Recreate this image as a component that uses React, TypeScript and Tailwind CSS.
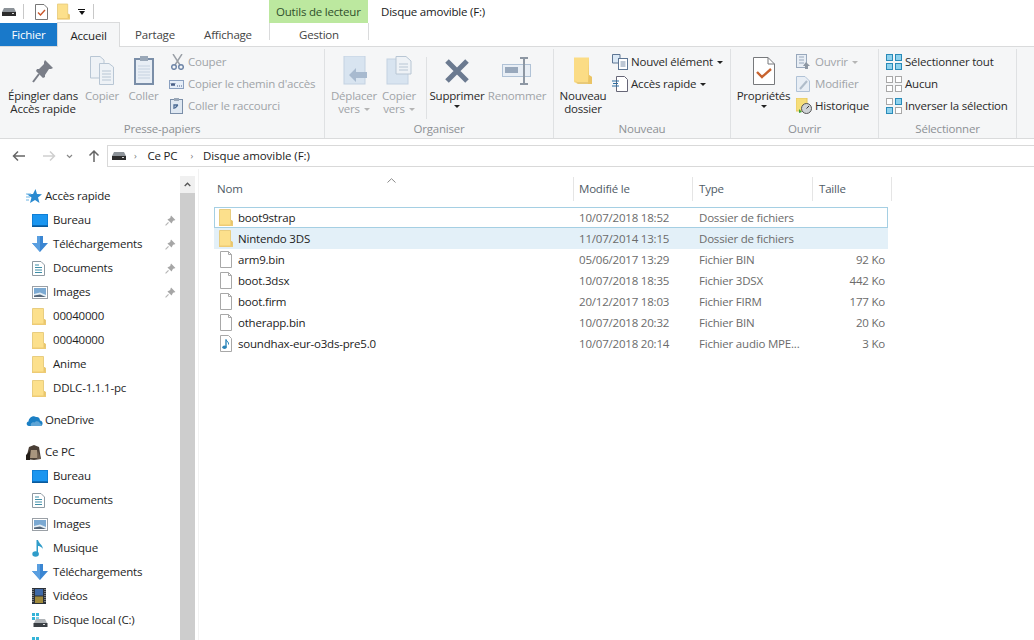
import type { ReactNode } from "react";

const Drive = ({ className = "" }: { className?: string }) => (
  <svg width="14" height="8" viewBox="0 0 14 8" className={className}>
    <path d="M2 0h10l2 4v4H0V4z" fill="#8c9298" />
    <rect x="0" y="4" width="14" height="4" fill="#2c2c2c" />
    <rect x="10" y="5" width="2" height="1" fill="#d8d8d8" />
  </svg>
);

const Folder = ({ w = 14, h = 17 }: { w?: number; h?: number }) => (
  <svg width={w} height={h} viewBox="0 0 14 17" className="shrink-0">
    <path d="M0.5 0.5H11.5V11L13.5 12V16.5H0.5z" fill="#fce08c" stroke="#e8cd80" />
    <path d="M11.5 11L13.5 12V16.5H11.5z" fill="#e9c66c" />
    <rect x="0" y="15.5" width="14" height="1.5" fill="#eecb74" />
  </svg>
);

const FileIcon = () => (
  <svg width="14" height="17" viewBox="0 0 14 17" className="shrink-0">
    <path d="M1.5 .5H9.5L12.5 3.5V16.5H1.5z" fill="#fff" stroke="#a8a8a8" />
    <path d="M9.5 .5V3.5H12.5" fill="none" stroke="#a8a8a8" />
  </svg>
);

const AudioFile = () => (
  <svg width="14" height="17" viewBox="0 0 14 17" className="shrink-0">
    <path d="M1.5 .5H9.5L12.5 3.5V16.5H1.5z" fill="#fff" stroke="#a8a8a8" />
    <path d="M7 4.5V12" stroke="#2a84b8" strokeWidth="1.4" fill="none" />
    <path d="M7 4.5C8 7 10 7 9.5 9.5" stroke="#2a84b8" fill="none" />
    <ellipse cx="5.5" cy="12.3" rx="2.2" ry="1.8" fill="#2a84b8" />
  </svg>
);

const Pin = () => (
  <svg width="11" height="11" viewBox="0 0 10 10">
    <path d="M5.5 0.5L9.5 4.5L8.3 5L7.3 5.2L6 7.8L2.2 4L4.8 2.7L5 1.7z" fill="#a6a6a6" />
    <path d="M3.2 6.8L.5 9.5" stroke="#b4b4b4" />
  </svg>
);

const Monitor = () => (
  <svg width="16" height="13" viewBox="0 0 16 13">
    <rect width="16" height="13" fill="#0f7fd6" />
    <rect x="1" y="1" width="14" height="10" fill="#1b96f0" />
    <rect x="0" y="11.5" width="16" height="1.5" fill="#0a5a9c" />
  </svg>
);

const Download = () => (
  <svg width="16" height="16" viewBox="0 0 16 16">
    <path d="M5 0H11V7H16L8 16L0 7H5z" fill="#3b86d2" />
    <path d="M5 0H8V16L0 7H5z" fill="#5a9fe0" />
  </svg>
);

const Doc = () => (
  <svg width="13" height="15" viewBox="0 0 13 15">
    <path d="M.5 .5H9L12.5 4V14.5H.5z" fill="#fff" stroke="#8e9aa3" />
    <path d="M3 4H7M3 6.5H10M3 9H10M3 11.5H10" stroke="#3f8fa8" />
  </svg>
);

const Pict = () => (
  <svg width="16" height="13" viewBox="0 0 16 13">
    <rect x=".5" y=".5" width="15" height="12" fill="#fff" stroke="#9aa0a6" />
    <rect x="2" y="2" width="12" height="9" fill="#7ba9d2" />
    <path d="M2 8L8 6.5L14 9V11H2z" fill="#e4eef5" />
    <path d="M2 11V9.5L8 8.5L14 11z" fill="#55677a" />
  </svg>
);

const Music = () => (
  <svg width="12" height="17" viewBox="0 0 12 17">
    <path d="M4.5 0H6C6.5 3 11 5 11 9.5C11 8 8 6 6 6V14h-1.500z" fill="#2f9cc9" />
    <ellipse cx="3.6" cy="14" rx="3.3" ry="2.8" fill="#2f9cc9" />
  </svg>
);

const Film = () => (
  <svg width="14" height="16" viewBox="0 0 14 16">
    <rect width="14" height="16" fill="#2c3138" />
    <rect x="3" y="1" width="8" height="6.500" fill="#3f6aa8" />
    <rect x="3" y="8.500" width="8" height="6.500" fill="#a08a3c" />
    <path d="M1 1v14M13 1v14" stroke="#c8c8c8" strokeDasharray="1 1" />
  </svg>
);

const LocalDisk = () => (
  <svg width="16" height="14" viewBox="0 0 16 14">
    <rect x="0" y="0" width="3" height="3" fill="#35b4d8" />
    <rect x="4" y="0" width="3" height="3" fill="#35b4d8" />
    <rect x="0" y="4" width="3" height="3" fill="#35b4d8" />
    <rect x="4" y="4" width="3" height="3" fill="#7fd0e8" />
    <path d="M4 6H13L15 10H2z" fill="#b0b4b8" />
    <rect x="1.500" y="10" width="14" height="4" fill="#3a3f44" />
    <rect x="11" y="11" width="2" height="1" fill="#ddd" />
  </svg>
);

const StarIcon = () => (
  <svg width="16" height="16" viewBox="0 0 16 16">
    <path d="M9.500 1L11 6L16 6.300L12 9.500L13.500 15L9 12L4 15L5.500 9.500L1 6.300L7 6z" fill="#2a8ad0" />
    <path d="M0 6H5M0 9H4M0 12H3" stroke="#6cb4e4" />
  </svg>
);

const Cloud = () => (
  <svg width="17" height="11" viewBox="0 0 17 11">
    <path d="M3 11C0 11 0 7 2.500 6.500C3 2.500 7 0 10 2C12.500 1.500 14 3.500 14 5.500C16.500 5.500 17.500 9 15.500 11z" fill="#1b7fc4" />
    <path d="M5 11C4 8.500 6.500 6.500 8.500 7.500C10 5.500 13.500 6 14 8.500C15.500 8.500 16 10 15.500 11z" fill="#fff" opacity=".3" />
  </svg>
);

const Avatar = () => (
  <svg width="15" height="15" viewBox="0 0 15 15">
    <path d="M3 2L8 0L13 2L15 14L8 15L0 14z" fill="#4a3f36" />
    <path d="M5 5H11L12 13H4z" fill="#a8957e" />
    <path d="M0 10L4 6V15H0z" fill="#231d18" />
    <path d="M12 6L15 14H11z" fill="#6a5a4c" />
  </svg>
);

const NavRow = ({ icon, label, pin, top }: { icon: ReactNode; label: string; pin?: boolean; top?: boolean }) => (
  <div className={`flex h-6 items-center text-[11.5px] text-[#1e1e1e] ${top ? "pl-[26px]" : "pl-[32px]"}`}>
    <span className={`flex shrink-0 items-center justify-start ${top ? "w-[19px]" : "w-[21px]"}`}>{icon}</span>
    <span className="flex-1 whitespace-nowrap">{label}</span>
    {pin && (
      <span className="mr-[4px] flex">
        <Pin />
      </span>
    )}
  </div>
);

const Caret = ({ muted }: { muted?: boolean }) => (
  <span className={`ml-[4px] inline-block h-0 w-0 border-x-[3px] border-t-[3px] border-x-transparent align-middle ${muted ? "border-t-[#b5b5b5]" : "border-t-[#222]"}`} />
);

const LargeBtn = ({ icon, label, w, muted, caret }: { icon: ReactNode; label: ReactNode; w: string; muted?: boolean; caret?: boolean }) => (
  <div className={`flex shrink-0 flex-col items-center ${w}`}>
    <div className="flex h-[40px] w-full items-center justify-center pt-[3px]">{icon}</div>
    <div className={`text-center text-[11.5px] leading-[13px] whitespace-nowrap ${muted ? "text-[#a0a4a8]" : "text-[#2a2a2a]"}`}>{label}</div>
    {caret && <div className="mt-[3px] h-0 w-0 border-x-[3px] border-t-[3px] border-x-transparent border-t-[#222]" />}
  </div>
);

const SmallBtn = ({ icon, label, muted, caret }: { icon: ReactNode; label: string; muted?: boolean; caret?: boolean }) => (
  <div className={`flex h-[22px] items-center text-[11.5px] whitespace-nowrap ${muted ? "text-[#a0a4a8]" : "text-[#2a2a2a]"}`}>
    <span className="flex w-[19px] shrink-0 items-center">{icon}</span>
    {label}
    {caret && <Caret muted={muted} />}
  </div>
);

const Group = ({ label, w, children }: { label: string; w: string; children: ReactNode }) => (
  <div className={`flex shrink-0 flex-col border-r border-[#dfe1e3] ${w}`}>
    <div className="flex h-[72px] flex-1">{children}</div>
    <div className="pb-px text-center text-[11.5px] leading-[16px] text-[#8d9195]">{label}</div>
  </div>
);

const GridIcon = ({ cells }: { cells: boolean[] }) => (
  <div className="grid h-[16px] w-[16px] grid-cols-2 gap-[2px]">
    {cells.map((c, i) => (
      <div key={i} className={c ? "border border-[#2a8bb8] bg-[#8ed2ee]" : "border border-[#a8a8a8] bg-white"} />
    ))}
  </div>
);

const files = [
  { name: "boot9strap", date: "10/07/2018 18:52", type: "Dossier de fichiers", size: "", icon: "folder" },
  { name: "Nintendo 3DS", date: "11/07/2014 13:15", type: "Dossier de fichiers", size: "", icon: "folder" },
  { name: "arm9.bin", date: "05/06/2017 13:29", type: "Fichier BIN", size: "92 Ko", icon: "file" },
  { name: "boot.3dsx", date: "10/07/2018 18:35", type: "Fichier 3DSX", size: "442 Ko", icon: "file" },
  { name: "boot.firm", date: "20/12/2017 18:03", type: "Fichier FIRM", size: "177 Ko", icon: "file" },
  { name: "otherapp.bin", date: "10/07/2018 20:32", type: "Fichier BIN", size: "20 Ko", icon: "file" },
  { name: "soundhax-eur-o3ds-pre5.0", date: "10/07/2018 20:14", type: "Fichier audio MPE...", size: "3 Ko", icon: "audio" },
];

export default function App() {
  return (
    <div className="flex h-[640px] w-[1034px] flex-col overflow-hidden bg-white font-['Open_Sans','Noto_Sans',sans-serif] text-[11.5px] tracking-[-0.2px]">
      {/* title bar */}
      <div className="flex h-[23px] shrink-0 items-center">
        <Drive className="ml-[2px]" />
        <div className="ml-[7px] h-[15px] w-px bg-[#c8c8c8]" />
        <svg width="13" height="16" viewBox="0 0 13 16" className="ml-[11px]">
          <path d="M.5 .5H9L12.500 4V15.500H.5z" fill="#fff" stroke="#777" />
          <path d="M3 8.500L5.500 11L10 6" fill="none" stroke="#c8562a" strokeWidth="1.400" />
        </svg>
        <div className="ml-[9px]">
          <Folder w={13} h={17} />
        </div>
        <div className="ml-[8px] flex flex-col items-center gap-[1px]">
          <div className="h-px w-[7px] bg-[#111]" />
          <div className="h-0 w-0 border-x-[3.500px] border-t-[4px] border-x-transparent border-t-[#111]" />
        </div>
        <div className="ml-[8px] h-[15px] w-px bg-[#c8c8c8]" />
        <div className="ml-[175px] flex h-[23px] w-[99px] items-center bg-[#bce89f] pl-[7px] text-[#30502c]">Outils de lecteur</div>
        <div className="ml-[13px] text-[#1a1a1a]">Disque amovible (F:)</div>
      </div>

      {/* tabs */}
      <div className="flex h-[24px] shrink-0 items-stretch border-b border-[#dadbdc] text-[#444]">
        <div className="flex w-[57px] items-center justify-center bg-[#1979ca] pt-px text-white">Fichier</div>
        <div className="z-10 -mt-[1px] -mb-[1px] flex w-[63px] items-center justify-center border-x border-t border-[#dadbdc] bg-[#f5f6f7] pt-px text-[#222]">Accueil</div>
        <div className="flex w-[70px] items-center justify-center pt-px">Partage</div>
        <div className="flex w-[76px] items-center justify-center pt-px">Affichage</div>
        <div className="ml-[3px] h-[17px] w-[100px] self-start border-x border-[#dadbdc] text-center leading-[24px]">Gestion</div>
      </div>

      {/* ribbon */}
      <div className="flex h-[92px] shrink-0 border-b border-[#dadbdc] bg-[#f5f6f7] pt-[2px]">
        <Group label="Presse-papiers" w="w-[325px]">
          <LargeBtn
            w="w-[86px]"
            label={<>Épingler dans<br />Accès rapide</>}
            icon={
              <svg width="22" height="24" viewBox="0 0 22 24">
                <path d="M13 1L21 9L19 10L17 10L13 16L13 18L11 19L4 12L5 10L7 10L12 5L12 3z" fill="#7a7e88" />
                <path d="M7 15L1 23" stroke="#7a7e88" strokeWidth="2" />
              </svg>
            }
          />
          <LargeBtn
            w="w-[32px]"
            muted
            label="Copier"
            icon={
              <svg width="24" height="29" viewBox="0 0 24 29">
                <path d="M.5 .5H10L14 4V22H.5z" fill="#eef2f6" stroke="#b8c6d4" />
                <path d="M9.500 7.500H19L23.500 11V28.500H9.500z" fill="#eef2f6" stroke="#b8c6d4" />
                <path d="M12 15H21M12 18H21M12 21H21M12 24H21" stroke="#b8c6d4" />
              </svg>
            }
          />
          <LargeBtn
            w="w-[51px]"
            muted
            label="Coller"
            icon={
              <svg width="20" height="29" viewBox="0 0 20 29">
                <rect x="1" y="3" width="18" height="25" fill="#e8eef5" stroke="#7a8ea8" strokeWidth="2" />
                <rect x="6" y="0" width="8" height="5" fill="#9aa8b8" />
                <path d="M4 10H16M4 13H16M4 16H16M4 19H16M4 22H16" stroke="#c6d2e0" />
              </svg>
            }
          />
          <div className="pt-[2px]">
            <SmallBtn
              muted
              label="Couper"
              icon={
                <svg width="13" height="16" viewBox="0 0 13 16" className="ml-[2px]">
                  <path d="M2 0L9 11M11 0L4 11" stroke="#9a9fa6" strokeWidth="1.400" />
                  <circle cx="3" cy="13" r="2.300" fill="none" stroke="#6f86a8" strokeWidth="1.500" />
                  <circle cx="10" cy="13" r="2.300" fill="none" stroke="#6f86a8" strokeWidth="1.500" />
                </svg>
              }
            />
            <SmallBtn
              muted
              label="Copier le chemin d'accès"
              icon={
                <svg width="15" height="9" viewBox="0 0 15 9">
                  <rect x=".5" y=".5" width="14" height="8" fill="#e6eef8" stroke="#8aa0c0" />
                  <path d="M2 3L3 6L4 3L5 6L6 3M8 6H9M10 6H11M12 6H13" stroke="#4a6088" fill="none" />
                </svg>
              }
            />
            <SmallBtn
              muted
              label="Coller le raccourci"
              icon={
                <svg width="13" height="16" viewBox="0 0 13 16" className="ml-px">
                  <rect x=".5" y="1.500" width="12" height="14" fill="#dfe8f2" stroke="#7a8ea8" />
                  <rect x="4" y="0" width="5" height="3" fill="#9aa8b8" />
                  <path d="M4 11V7H8M8 7L5 10" fill="none" stroke="#4a6a94" strokeWidth="1.300" />
                </svg>
              }
            />
          </div>
        </Group>
        <Group label="Organiser" w="w-[229px]">
          <LargeBtn
            w="w-[58px]"
            muted
            label={<>Déplacer<br />vers<Caret muted /></>}
            icon={
              <svg width="26" height="29" viewBox="0 0 26 29">
                <rect x="3" y="0" width="21" height="28" fill="#d8e4f0" stroke="#c4d2e2" />
                <path d="M8 19L15 12V16H26V22H15V26z" fill="#a8bacf" />
              </svg>
            }
          />
          <LargeBtn
            w="w-[32px]"
            muted
            label={<>Copier<br />vers<Caret muted /></>}
            icon={
              <svg width="26" height="29" viewBox="0 0 26 29">
                <rect x="1" y="3" width="21" height="25" fill="#d8e4f0" stroke="#c4d2e2" />
                <path d="M10 .5H20L25 5V18H10z" fill="#eef2f6" stroke="#b8c6d4" />
                <path d="M13 8H22M13 11H22M13 14H22" stroke="#b8c6d4" />
              </svg>
            }
          />
          <div className="mt-[8px] mb-[2px] ml-[11px] w-px self-stretch bg-[#dfe1e3]" />
          <LargeBtn
            w="w-[60px]"
            caret
            label="Supprimer"
            icon={
              <svg width="26" height="26" viewBox="0 0 26 26">
                <path d="M3 3L23 23M23 3L3 23" stroke="#6b7a90" strokeWidth="5" />
              </svg>
            }
          />
          <LargeBtn
            w="w-[60px]"
            muted
            label="Renommer"
            icon={
              <svg width="30" height="28" viewBox="0 0 30 28">
                <rect x=".5" y="7.500" width="28" height="12" fill="#e8eef5" stroke="#b0c2d6" />
                <rect x="3" y="10" width="13" height="6" fill="#98a8bc" />
                <path d="M18 1H26M22 1V27M18 27H26" stroke="#8d97a3" strokeWidth="2" />
              </svg>
            }
          />
        </Group>
        <Group label="Nouveau" w="w-[177px]">
          <LargeBtn
            w="w-[58px]"
            label={<>Nouveau<br />dossier</>}
            icon={
              <svg width="18" height="28" viewBox="0 0 18 28">
                <path d="M0 .5H15V18L18 20V27H4L0 25z" fill="#fbdc85" />
                <path d="M15 .5V18L18 20V27H14z" fill="#eac466" />
                <path d="M0 23L4 27H14V25H3z" fill="#e8c978" />
              </svg>
            }
          />
          <div className="pt-[2px]">
            <SmallBtn
              caret
              label="Nouvel élément"
              icon={
                <svg width="16" height="16" viewBox="0 0 16 16">
                  <path d="M.5 .5H8V9H.5z" fill="#dbe9f6" stroke="#5e7694" />
                  <rect x="6.500" y="4.500" width="9" height="11" fill="#fff" stroke="#5e7694" />
                  <path d="M8.500 8H13.500M8.500 10H13.500M8.500 12H13.500" stroke="#7a8ea8" />
                </svg>
              }
            />
            <SmallBtn
              caret
              label="Accès rapide"
              icon={
                <svg width="16" height="16" viewBox="0 0 16 16">
                  <path d="M4.500 .5H12.500L15.500 3.500V15.500H4.500z" fill="#fff" stroke="#667" />
                  <path d="M0 5H7M1 7.500H6M0 10H7" stroke="#2d6fa3" />
                </svg>
              }
            />
          </div>
        </Group>
        <Group label="Ouvrir" w="w-[148px]">
          <LargeBtn
            w="w-[65px]"
            caret
            label="Propriétés"
            icon={
              <svg width="22" height="28" viewBox="0 0 22 28">
                <path d="M.5 .5H15L21.500 7V27.500H.5z" fill="#fff" stroke="#77797c" />
                <path d="M15 .5V7H21.500" fill="none" stroke="#77797c" />
                <path d="M4 15L9 20L18 12" fill="none" stroke="#c8632f" strokeWidth="2.400" />
              </svg>
            }
          />
          <div className="pt-[2px]">
            <SmallBtn
              muted
              caret
              label="Ouvrir"
              icon={
                <svg width="14" height="16" viewBox="0 0 14 16">
                  <rect x=".5" y=".5" width="10" height="13" fill="#e8eef5" stroke="#98a8bc" />
                  <path d="M3 3H8M3 6H8M3 9H8" stroke="#98a8bc" />
                  <path d="M10 8L14 12H12V15H9V12H7z" fill="#8d97a3" />
                </svg>
              }
            />
            <SmallBtn
              muted
              label="Modifier"
              icon={
                <svg width="14" height="16" viewBox="0 0 14 16">
                  <path d="M.5 .5H9L13.500 5V15.500H.5z" fill="#e8eef5" stroke="#b0c2d6" />
                  <path d="M4 13L11 5" stroke="#b0bdca" strokeWidth="2" />
                </svg>
              }
            />
            <SmallBtn
              label="Historique"
              icon={
                <svg width="16" height="16" viewBox="0 0 16 16">
                  <rect x="0" y="0" width="11" height="13" fill="#f6de7a" stroke="#e6c860" />
                  <circle cx="10.500" cy="10.500" r="5" fill="#cfd3d6" stroke="#555" />
                  <path d="M3 11L6 14L3 15z" fill="#3fa33a" />
                  <path d="M10.500 10.500L13 8" stroke="#333" />
                </svg>
              }
            />
          </div>
        </Group>
        <Group label="Sélectionner" w="w-[138px]">
          <div className="pt-[2px] pl-[7px]">
            <SmallBtn label="Sélectionner tout" icon={<GridIcon cells={[true, true, true, true]} />} />
            <SmallBtn label="Aucun" icon={<GridIcon cells={[false, false, false, false]} />} />
            <SmallBtn label="Inverser la sélection" icon={<GridIcon cells={[false, true, true, false]} />} />
          </div>
        </Group>
      </div>

      {/* address bar */}
      <div className="flex h-[30px] shrink-0 items-center pt-[5px] pb-px">
        <svg width="14" height="12" viewBox="0 0 14 12" className="ml-[12px]">
          <path d="M13 6H2M6 1.500L1.500 6L6 10.500" fill="none" stroke="#666" strokeWidth="1.500" />
        </svg>
        <svg width="14" height="12" viewBox="0 0 14 12" className="ml-[16px]">
          <path d="M1 6H12M8 1.500L12.500 6L8 10.500" fill="none" stroke="#cfcfcf" strokeWidth="1.500" />
        </svg>
        <svg width="7" height="5" viewBox="0 0 7 5" className="ml-[10px]">
          <path d="M1 1L3.500 3.500L6 1" fill="none" stroke="#888" strokeWidth="1.200" />
        </svg>
        <svg width="12" height="14" viewBox="0 0 12 14" className="ml-[15px]">
          <path d="M6 13V2M1.500 6.500L6 2L10.500 6.500" fill="none" stroke="#666" strokeWidth="1.500" />
        </svg>
        <div className="ml-[7px] flex h-[22px] flex-1 items-center border border-r-0 border-[#d9d9d9] pl-[4px] text-[#222]">
          <Drive />
          <span className="ml-[8px] text-[9px] text-[#777]">›</span>
          <span className="ml-[11px]">Ce PC</span>
          <span className="ml-[13px] text-[9px] text-[#777]">›</span>
          <span className="ml-[10px] tracking-[-0.05px]">Disque amovible (F:)</span>
        </div>
      </div>

      {/* body */}
      <div className="flex min-h-0 flex-1">
        <div className="w-[180px] shrink-0 overflow-hidden pt-[15px]">
          <NavRow top icon={<StarIcon />} label="Accès rapide" />
          <NavRow icon={<Monitor />} label="Bureau" pin />
          <NavRow icon={<Download />} label="Téléchargements" pin />
          <NavRow icon={<Doc />} label="Documents" pin />
          <NavRow icon={<Pict />} label="Images" pin />
          <NavRow icon={<Folder />} label="00040000" />
          <NavRow icon={<Folder />} label="00040000" />
          <NavRow icon={<Folder />} label="Anime" />
          <NavRow icon={<Folder />} label="DDLC-1.1.1-pc" />
          <div className="h-2" />
          <NavRow top icon={<Cloud />} label="OneDrive" />
          <div className="h-2" />
          <NavRow top icon={<Avatar />} label="Ce PC" />
          <NavRow icon={<Monitor />} label="Bureau" />
          <NavRow icon={<Doc />} label="Documents" />
          <NavRow icon={<Pict />} label="Images" />
          <NavRow icon={<Music />} label="Musique" />
          <NavRow icon={<Download />} label="Téléchargements" />
          <NavRow icon={<Film />} label="Vidéos" />
          <NavRow icon={<LocalDisk />} label="Disque local (C:)" />
          <NavRow icon={<LocalDisk />} label="Disque local (F:)" />
        </div>
        {/* sidebar scrollbar */}
        <div className="mt-[7px] flex w-[15px] shrink-0 flex-col bg-[#f0f0f0]">
          <div className="flex h-[17px] items-center justify-center">
            <svg width="7" height="5" viewBox="0 0 7 5">
              <path d="M.7 4L3.500 1.200L6.300 4" fill="none" stroke="#555" strokeWidth="1.300" />
            </svg>
          </div>
          <div className="flex-1 bg-[#cdcdcd]" />
        </div>
        <div className="ml-[3px] w-px shrink-0 bg-[#f2f2f2]" />

        {/* list */}
        <div className="relative min-w-0 flex-1 pl-[15px] pt-[8px]">
          <svg width="9" height="5" viewBox="0 0 9 5" className="absolute left-[188px] top-[9px]">
            <path d="M.5 4.500L4.500 .7L8.500 4.500" fill="none" stroke="#8a8a8a" />
          </svg>
          <div className="flex h-[24px] w-[678px] items-center text-[#4f5b66]">
            <div className="h-full w-[359px] pl-[3px] leading-[24px]">Nom</div>
            <div className="h-full w-[119px] border-l border-[#e5e5e5] pl-[5px] leading-[24px]">Modifié le</div>
            <div className="h-full w-[120px] border-l border-[#e5e5e5] pl-[6px] leading-[24px]">Type</div>
            <div className="h-full w-[80px] border-x border-[#e5e5e5] pl-[6px] leading-[24px]">Taille</div>
          </div>
          <div className="mt-[6px] w-[674px]">
            {files.map((f, i) => (
              <div
                key={f.name}
                className={`flex h-[21px] items-center ${i === 0 ? "border border-[#a5cfe3]" : ""} ${i === 1 ? "bg-[#e3f0f8]" : ""}`}
              >
                <div className={`flex items-center gap-[5px] text-[#222] ${i === 0 ? "w-[358px] pl-[4px]" : "w-[359px] pl-[5px]"}`}>
                  {f.icon === "folder" && <Folder />}
                  {f.icon === "file" && <FileIcon />}
                  {f.icon === "audio" && <AudioFile />}
                  <span className="whitespace-nowrap">{f.name}</span>
                </div>
                <div className="w-[120px] pl-[6px] whitespace-nowrap text-[#6b6b6b]">{f.date}</div>
                <div className="w-[120px] pl-[6px] whitespace-nowrap text-[#6b6b6b]">{f.type}</div>
                <div className="flex-1 pr-[3px] text-right whitespace-nowrap text-[#6b6b6b]">{f.size}</div>
              </div>
            ))}
          </div>
        </div>
      </div>
    </div>
  );
}
